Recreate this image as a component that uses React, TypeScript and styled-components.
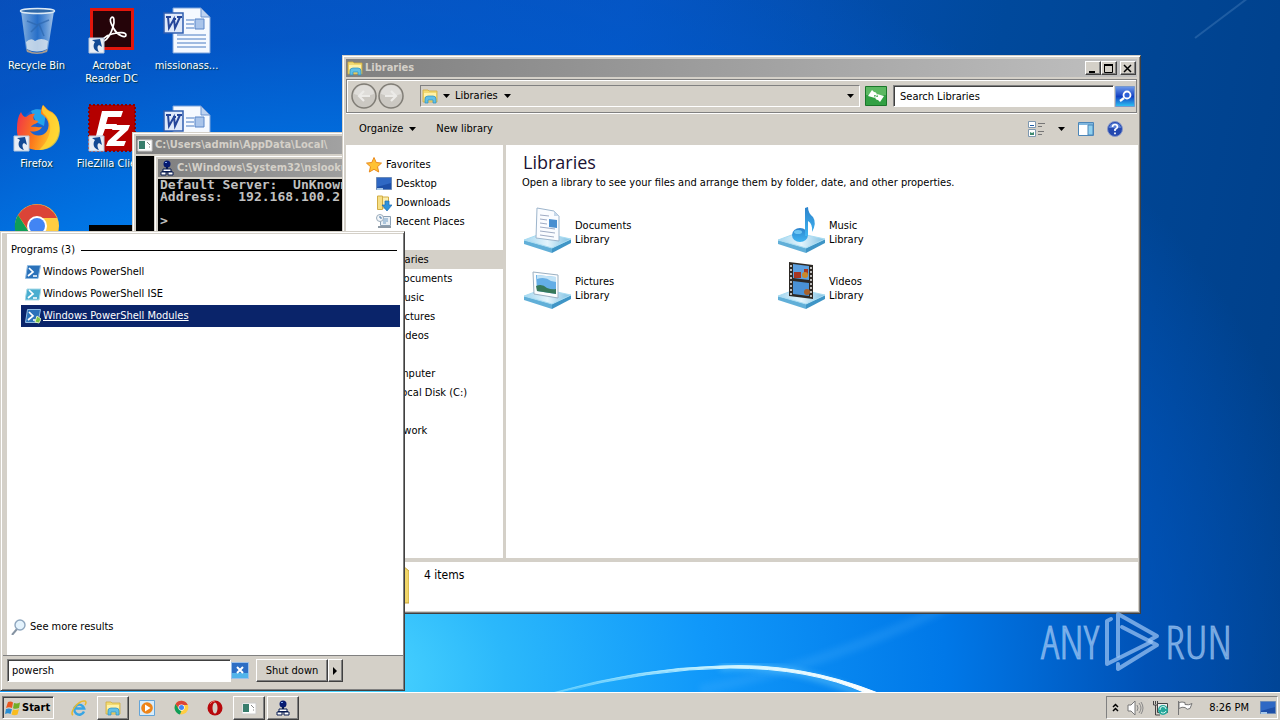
import React from "react";
import styled, { createGlobalStyle, css } from "styled-components";

const face = "#d4d0c8";
const uiFont = `"DejaVu Sans Condensed", "DejaVu Sans", sans-serif`;

const GlobalStyle = createGlobalStyle`
  * { box-sizing: border-box; }
  body { margin: 0; font: 11px/14px ${uiFont}; color: #000; }
  button, input { font: inherit; color: inherit; margin: 0; padding: 0; border: 0; border-radius: 0; background: none; }
  a { color: inherit; text-decoration: none; }
  h1, h2, p, ul { margin: 0; padding: 0; font-weight: normal; list-style: none; }
  svg { display: block; flex: none; }
`;

const raised = css`
  border: 1px solid;
  border-color: #fff #404040 #404040 #fff;
  box-shadow: inset -1px -1px #808080;
`;
const sunken = css`
  border: 1px solid;
  border-color: #808080 #fff #fff #808080;
  box-shadow: inset 1px 1px #404040;
`;

/* ---------- desktop ---------- */
const Screen = styled.div`
  display: flex;
  flex-direction: column;
  min-height: 100vh;
`;
const Desktop = styled.main`
  position: relative;
  flex: 1;
  overflow: hidden;
  background:
    radial-gradient(ellipse 1000px 800px at 27% 98%, #4fd8ff 0%, #2bb8fb 16%, #1098fa 36%, #0078e8 60%, rgba(0, 92, 208, 0.6) 80%, rgba(0, 90, 200, 0) 100%),
    linear-gradient(100deg, #0a4bb4 0%, #0653c0 45%, #00499c 72%, #003f88 100%);
`;
const Wallpaper = styled.svg`
  position: absolute;
  left: 0;
  bottom: 0;
`;
const IconGrid = styled.ul`
  display: grid;
  grid-template-columns: repeat(3, 75px);
  grid-auto-rows: 98px;
  padding-top: 6px;
`;
const Shortcut = styled.a`
  position: relative;
  display: flex;
  flex-direction: column;
  align-items: center;
  gap: 5px;
  padding-right: 2px;
  color: #fff;
  line-height: 13px;
  text-align: center;
  white-space: pre-line;
  text-shadow: 1px 1px 1px #033;
`;
const DesktopIcon = styled.li`
  width: 75px;
`;

/* ---------- windows ---------- */
const Window = styled.section`
  position: absolute;
  display: flex;
  flex-direction: column;
  padding: 2px;
  background: ${face};
  border: 1px solid;
  border-color: ${face} #404040 #404040 ${face};
  box-shadow: inset 1px 1px #fff, inset -1px -1px #808080;
`;
const ExplorerWindow = styled(Window)`
  left: 342px;
  right: 139px;
  top: 55px;
  bottom: 78px;
`;
const HostWindow = styled(Window)`
  left: 132px;
  top: 132px;
  width: 400px;
  height: 300px;
`;
const LookupWindow = styled(Window)`
  left: 154px;
  top: 155px;
  width: 400px;
  height: 300px;
`;
const TitleBar = styled.header`
  display: flex;
  align-items: center;
  gap: 2px;
  height: 18px;
  margin: 1px 1px 0;
  padding: 0 1px;
  color: ${face};
  font-weight: bold;
  white-space: nowrap;
  background: linear-gradient(90deg, #808080, #c0c0c0);
`;
const Title = styled.h1`
  flex: 1;
  font-size: 11px;
  font-weight: bold;
`;
const CaptionButton = styled.button<{ $gap?: boolean }>`
  ${raised}
  display: grid;
  place-items: center;
  width: 16px;
  height: 14px;
  margin-left: ${(p) => (p.$gap ? 1 : -2)}px;
  background: ${face};
`;
const Console = styled.pre`
  flex: 1;
  margin: 2px 1px 1px;
  padding: 0 2px;
  color: #c0c0c0;
  background: #000;
  font: bold 13px/12px "DejaVu Sans Mono", monospace;
`;

/* ---------- explorer ---------- */
const NavBar = styled.div`
  display: flex;
  align-items: center;
  gap: 5px;
  height: 34px;
  margin: 2px 1px 0;
  padding: 0 1px 0 4px;
  border: 1px solid #808080;
  box-shadow: inset 1px 1px #fff, 0 1px #fff;
`;
const TravelButtons = styled.div`
  display: flex;
  gap: 1px;
  margin-right: 11px;
`;
const PlainButton = styled.button`
  display: flex;
  align-items: center;
  gap: 6px;
  white-space: nowrap;
`;
const AddressBar = styled.div`
  display: flex;
  flex: 1;
  align-items: center;
  gap: 5px;
  height: 22px;
  padding: 0 5px 0 1px;
  border: 1px solid;
  border-color: #808080 #fff #fff #808080;
`;
const Spring = styled.span`
  flex: 1;
`;
const SearchBox = styled.input`
  ${sunken}
  width: 221px;
  height: 22px;
  padding: 0 6px;
  background: #fff;
  margin-left: 1px;
  &::placeholder { color: #000; opacity: 1; }
`;
const SearchButton = styled.button`
  margin-left: -4px;
`;
const CommandBar = styled.div`
  display: flex;
  align-items: center;
  gap: 20px;
  height: 32px;
  padding: 0 15px 0 14px;
`;
const ViewTools = styled.div`
  display: flex;
  align-items: center;
  gap: 13px;
`;
const Body = styled.div`
  display: flex;
  flex: 1;
  min-height: 0;
  margin-left: 1px;
  background: #fff;
`;
const Sidebar = styled.nav`
  width: 160px;
  padding-top: 10px;
  border-right: 3px solid ${face};
  overflow: hidden;
`;
const TreeItem = styled.a<{ $depth: number; $selected?: boolean }>`
  display: flex;
  align-items: center;
  gap: 4px;
  height: 19px;
  padding-left: ${(p) => 20 + p.$depth * 10}px;
  background: ${(p) => (p.$selected ? face : "transparent")};
`;
const TreeGap = styled.div`
  height: 19px;
`;
const Content = styled.div`
  flex: 1;
  padding: 6px 16px;
`;
const Heading = styled.h2`
  padding: 0 0 3px 1px;
  font: 18px/22px "Open Sans", sans-serif;
  color: #1a1233;
`;
const Libraries = styled.ul`
  display: grid;
  grid-template-columns: 254px 254px;
  grid-auto-rows: 56px;
  padding-top: 14px;
`;
const Library = styled.a`
  display: flex;
  align-items: center;
  gap: 2px;
  padding-left: 1px;
`;
const LibraryLabel = styled.span`
  width: 60px;
  padding-top: 8px;
`;
const Details = styled.footer`
  display: flex;
  align-items: flex-start;
  gap: 15px;
  height: 53px;
  padding-left: 16px;
  background: #fff;
  border-top: 4px solid ${face};
`;
const ItemCount = styled.p`
  padding-top: 6px;
  font-size: 12px;
`;

/* ---------- start menu ---------- */
const StartMenu = styled.section`
  position: absolute;
  z-index: 2;
  left: 0;
  bottom: 1px;
  width: 405px;
  height: 460px;
  display: flex;
  flex-direction: column;
  padding: 2px 1px 1px 2px;
  background: ${face};
  border: 1px solid;
  border-color: ${face} #404040 #404040 ${face};
  box-shadow: inset 1px 1px #fff, inset -1px -1px #808080;
`;
const Results = styled.div`
  flex: 1;
  display: flex;
  flex-direction: column;
  margin-left: 4px;
  padding: 9px 3px 20px 4px;
  background: #fff;
`;
const GroupTitle = styled.h2`
  display: flex;
  align-items: center;
  gap: 6px;
  font-size: 11px;
  line-height: 14px;
  padding-right: 3px;
  margin-bottom: 4px;
  &::after { content: ""; flex: 1; border-top: 1px solid #000; }
`;
const Result = styled.a<{ $selected?: boolean }>`
  display: flex;
  align-items: center;
  gap: 2px;
  height: 22px;
  margin-left: 10px;
  padding-left: 4px;
  ${(p) => p.$selected && css`
    color: #fff;
    background: #0a246a;
    text-decoration: underline;
  `}
`;
const MoreResults = styled.a`
  display: flex;
  align-items: center;
  gap: 3px;
  margin-top: auto;
`;
const MenuFooter = styled.div`
  display: flex;
  align-items: flex-start;
  height: 34px;
  padding: 3px 0 0 4px;
  border-top: 1px solid #808080;
`;
const QueryBox = styled.input`
  ${sunken}
  width: 224px;
  height: 23px;
  padding: 0 4px;
  background: #fff;
`;
const ClearButton = styled.button`
  margin: 3px 7px 0 0;
`;
const RaisedButton = styled.button<{ $width: number }>`
  ${raised}
  display: grid;
  place-items: center;
  width: ${(p) => p.$width}px;
  height: 23px;
  background: ${face};
`;

/* ---------- taskbar ---------- */
const Taskbar = styled.footer`
  display: flex;
  align-items: center;
  height: 28px;
  padding: 2px 2px 0;
  background: ${face};
  border-top: 1px solid #fff;
`;
const StartButton = styled.button`
  ${sunken}
  display: flex;
  align-items: center;
  gap: 1px;
  width: 52px;
  height: 23px;
  padding-left: 2px;
  margin-right: 8px;
  font-weight: bold;
`;
const TaskButton = styled.button<{ $open?: boolean }>`
  display: grid;
  place-items: center;
  width: 32px;
  height: 24px;
  margin: 0 1px;
  border: 1px solid transparent;
  ${(p) => p.$open && raised}
`;
const Tray = styled.div`
  display: flex;
  align-items: center;
  gap: 8px;
  height: 23px;
  margin-left: auto;
  padding: 0 1px 0 5px;
  border: 1px solid;
  border-color: #808080 #fff #fff #808080;
`;
const Clock = styled.time`
  padding: 0 3px 0 8px;
`;
const Watermark = styled.div`
  position: absolute;
  z-index: 3;
  right: 48px;
  bottom: 20px;
  display: flex;
  align-items: center;
  gap: 4px;
  color: rgba(160, 200, 245, 0.7);
  -webkit-text-stroke: 1px rgba(160, 200, 245, 0.6);
  font: 300 46px/62px "Open Sans Condensed Light", "Open Sans Condensed", "Roboto Condensed", "Liberation Sans Narrow", sans-serif;
`;

/* ---------- icons ---------- */
const Arrow = ({ side }: { side?: boolean }) =>
  side ? <svg width="5" height="8"><path d="M0 0v8l4-4z" /></svg> : <svg width="7" height="4"><path d="M0 0h7L3.500 4z" /></svg>;

const ShortcutMark = () => (
  <g>
    <path d="M1 32h15v15H1z" fill="#e8eef6" stroke="#b8c8dc" />
    <path d="M4 34l8-1 2 8-3-2c-2 1-2 4 0 7-5-1-7-6-4-10z" fill="#134a94" />
  </g>
);
const BinIcon = () => (
  <svg width="48" height="48" viewBox="0 0 48 48">
    <defs><linearGradient id="bin"><stop stopColor="#b7d5ec" stopOpacity=".75" /><stop offset=".5" stopColor="#4a8cd0" stopOpacity=".5" /><stop offset="1" stopColor="#c4dcf2" stopOpacity=".85" /></linearGradient></defs>
    <path d="M8 5l5 38q11 6 22 0l6-38z" fill="url(#bin)" />
    <path d="M13 36q5-5 9-1 6-4 13 0l-1 8q-10 5-20 0z" fill="#dfe7ee" opacity=".8" />
    <path d="M13 43q11 7 22 0l-1 3q-10 4-20 0z" fill="#a89c90" />
    <ellipse cx="24.500" cy="5" rx="17" ry="2.500" fill="#2f68a8" stroke="#dbe9f5" strokeWidth="1.500" />
    <path d="M14 15l10 4 12-5M18 26l8-8 5 12" stroke="#2c67ae" strokeWidth="1.500" fill="none" opacity=".7" />
  </svg>
);
const AcrobatIcon = () => (
  <svg width="48" height="48" viewBox="0 0 48 48">
    <path d="M2 2h44v42H2z" fill="#e2160c" /><path d="M5 5h38v36H5z" fill="#250409" />
    <path d="M23 12c3-3 4 3 2 9-2 7-6 13-9 14-3 0 0-5 8-7 7-2 14-2 14 1 0 4-9 0-12-6-3-5-5-9-3-11z" fill="none" stroke="#fff" strokeWidth="1.700" />
    <ShortcutMark />
  </svg>
);
const WordIcon = () => (
  <svg width="48" height="48" viewBox="0 0 48 48">
    <path d="M10 2h28l9 9v36H10z" fill="#f5f9ff" stroke="#7ca3da" /><path d="M38 2v9h9z" fill="#bdd2f0" stroke="#6d93cf" />
    <path d="M23 14h8M23 18h8M23 22h8M14 29h29M14 33h29M14 37h29M14 41h29" stroke="#83a5d8" strokeWidth="1.500" />
    <path d="M32 13h9v10h-9z" fill="#a9c4ea" stroke="#5a86c8" />
    <path d="M1 7h19v20H1z" fill="#dfe9fa" stroke="#2f5db0" strokeWidth="1.500" />
    <path d="M3 11h5M5 11l1 11 5-9 1 9 5-11M10 13h3M14 11h5" stroke="#24459a" strokeWidth="2" fill="none" />
  </svg>
);
const FirefoxIcon = () => (
  <svg width="48" height="48" viewBox="0 0 48 48">
    <defs><linearGradient id="fx" x1="0" y1=".2" x2="1" y2=".5"><stop stopColor="#f0324a" /><stop offset=".5" stopColor="#fb7a1c" /><stop offset="1" stopColor="#ffd42c" /></linearGradient></defs>
    <circle cx="26" cy="22" r="17" fill="#1a62d0" /><path d="M18 7c5-3 11-2 15 1l-2 14-8-4z" fill="#23a4ec" />
    <path d="M8 8c1 3 3 5 5 5 3-3 7-4 9-3-2 2-2 4-1 6l4 1c0 3-6 3-7 6 4-1 8 1 11 0-3 5-9 5-12 4 4 6 13 6 17 0 4-7 0-14-6-17 0-3 0-6 2-9 3 2 4 5 7 6 7 3 10 11 9 20-1 12-11 19-21 19C12 46 3 36 4 24c0-6 1-12 4-16z" fill="url(#fx)" />
    <path d="M30 1c-2 4-1 8 2 10 9 9 6 24-6 35 12 0 20-7 21-19 0-10-4-16-10-19-3-2-5-4-7-7z" fill="#ffd935" opacity=".75" />
    <ShortcutMark />
  </svg>
);
const FileZillaIcon = () => (
  <svg width="48" height="48" viewBox="0 0 48 48">
    <path d="M1 1h46v46H1z" fill="#b40000" stroke="#8c0000" strokeWidth="2" strokeDasharray="2 2" />
    <path d="M14 7h21l-2 6H20l-2 7h11l-2 5H17l-4 11H7zM26 21h16l-2 5-12 11h10l-2 5H18l2-5 12-11h-8z" fill="#fff" />
    <ShortcutMark />
  </svg>
);
const ChromeIcon = ({ size }: { size: number }) => (
  <svg width={size} height={size} viewBox="0 0 48 48">
    <circle cx="24" cy="24" r="22" fill="#ffcd42" /><path d="M5 13a22 22 0 0 1 39 3H24l-8 13z" fill="#db4437" />
    <path d="M5 13l11 17 8 4-5 12A22 22 0 0 1 5 13z" fill="#0f9d58" />
    <circle cx="24" cy="24" r="10" fill="#fff" /><circle cx="24" cy="24" r="8" fill="#4285f4" />
  </svg>
);
const BlackIcon = () => <svg width="48" height="48"><path d="M1 23h47v25H1z" /></svg>;

const FolderIcon = ({ size = 16 }: { size?: number }) => (
  <svg width={size} height={size} viewBox="0 0 16 16">
    <path d="M1 2h5l1 1h8v11H1z" fill="#f2da72" stroke="#d0ac3c" strokeWidth=".8" /><path d="M2 5h12v4H2z" fill="#fff2a8" />
    <path d="M3 15v-4q0-3 3-3h5q3 0 3 3v4h-3v-3H6v3z" fill="#62c0e6" stroke="#2d8fc0" strokeWidth=".7" />
  </svg>
);
const CmdIcon = () => (
  <svg width="16" height="16" viewBox="0 0 16 16"><path d="M1 3h14v11H1z" fill="#fff" stroke="#ccc" /><path d="M2 4h6v8H2z" fill="#387d6c" /><path d="M10 5l3 3M12 10h1" stroke="#888" /></svg>
);
const NetIcon = () => (
  <svg width="16" height="16" viewBox="0 0 16 16">
    <circle cx="8" cy="4" r="3.500" fill="#061a70" /><path d="M6 2h2v1H6z" fill="#7da8f0" />
    <path d="M7 7h2v2H7z" fill="#061a50" /><path d="M4 9h8v3H4z" fill="#fff" stroke="#061a50" /><path d="M2 12h5v3H2zM9 12h5v3H9z" fill="#fff" stroke="#061a50" /><path d="M3 11h10v1H3z" fill="#061a50" />
  </svg>
);
const Travel = ({ back }: { back?: boolean }) => (
  <svg width="26" height="26" viewBox="0 0 26 26">
    <circle cx="13" cy="13" r="12" fill="#cbc8c2" stroke="#807d76" strokeWidth="1.500" /><path d="M3 11a10 9 0 0 1 20 0q-10 4-20 0z" fill="#dfddd9" />
    <path d={back ? "M19 13H8m5-5l-5 5 5 5" : "M7 13h11m-5-5l5 5-5 5"} fill="none" stroke="#ecebe8" strokeWidth="2.200" />
  </svg>
);
const RefreshIcon = () => (
  <svg width="22" height="20" viewBox="0 0 22 20">
    <path d="M.5.500h21v19H.5z" fill="#32a043" stroke="#1b762a" /><path d="M1 1h20v8H1z" fill="#5cb862" />
    <path d="M3 10l4-6 2 2q3 0 3 4-2-1-3-1l1 3zM19 10l-4 6-2-2q-3 0-3-4 2 1 3 1l-1-3z" fill="#fff" />
  </svg>
);
const SearchIcon = () => (
  <svg width="20" height="21" viewBox="0 0 20 21">
    <defs><linearGradient id="sb" x2="0" y2="1"><stop stopColor="#6f9bea" /><stop offset=".5" stopColor="#123fc2" /><stop offset="1" stopColor="#2ec4f4" /></linearGradient></defs>
    <path d="M.5.500h19v20H.5z" fill="url(#sb)" stroke="#7899cc" /><circle cx="12" cy="9" r="3.500" fill="#2c60d8" stroke="#fff" strokeWidth="1.800" /><path d="M9 12l-4 3" stroke="#fff" strokeWidth="2.200" />
  </svg>
);
const ViewsIcon = () => (
  <svg width="17" height="16" viewBox="0 0 17 16">
    <path d="M.5.500h7v6h-7zM.5 8.500h7v7h-7z" fill="#fff" stroke="#7e98b0" /><path d="M2 4h4v1H2z" fill="#1f5fa8" /><path d="M2 14v-3l2 1 2-1v3z" fill="#3f8a70" />
    <path d="M10 2.500h7M10 5.500h4M10 10.500h6M10 13.500h4" stroke="#777" />
  </svg>
);
const PaneIcon = () => (
  <svg width="16" height="14" viewBox="0 0 16 14"><path d="M.5.500h15v13H.5z" fill="#fff" stroke="#4c86b8" /><path d="M1 1h14v2H1z" fill="#7fb6de" /><path d="M10 3h5v10h-5z" fill="#8fd0ee" stroke="#4c86b8" /></svg>
);
const HelpIcon = () => (
  <svg width="16" height="16" viewBox="0 0 16 16">
    <circle cx="8" cy="8" r="7.500" fill="#2549b0" stroke="#8798c8" /><path d="M2 7a6 5 0 0 1 12 0z" fill="#5d82d8" />
    <path d="M5.500 6q0-2.500 2.500-2.500T10.500 6Q10.500 7 8 8.500v1.500M8 11.500v1.700" fill="none" stroke="#fff" strokeWidth="1.700" />
  </svg>
);
const StarIcon = () => (
  <svg width="16" height="16" viewBox="0 0 16 16"><path d="M8 .5l2.200 5 5.300.6-4 3.600 1.200 5.300L8 12.300 3.300 15l1.200-5.300-4-3.600 5.300-.6z" fill="#ffc234" stroke="#e98a1c" /></svg>
);
const MonitorIcon = () => (
  <svg width="16" height="14" viewBox="0 0 16 14"><path d="M.5.500h15v12H.5z" fill="#1d4fa8" stroke="#6a8ab8" /><path d="M1 1h14v5L1 10z" fill="#2f68c4" /><path d="M1 11h6v2H1z" fill="#a8c8e8" /></svg>
);
const DownloadIcon = () => (
  <svg width="16" height="16" viewBox="0 0 16 16"><path d="M1.500 1h5v13.500h-5z" fill="#f6df86" stroke="#d2ad45" /><path d="M6.500 2h6v11h-6z" fill="#fbeeb0" stroke="#d2ad45" /><path d="M9 6h4v4h3l-5 6-5-6h3z" fill="#2e93dc" stroke="#1c6bb0" strokeWidth=".7" /></svg>
);
const RecentIcon = () => (
  <svg width="16" height="16" viewBox="0 0 16 16"><path d="M4.500 2.500h10v9h-10z" fill="#eaf0f5" stroke="#8ba0b4" /><path d="M7 5h5M7 7h5M7 9h3" stroke="#6e9cc4" /><path d="M2 12h13v2H2z" fill="#8d9aa6" /><circle cx="4" cy="4" r="3.500" fill="#f4f7fa" stroke="#9aabba" /><path d="M4 2v2h2" stroke="#4878a8" fill="none" /></svg>
);
const BlankIcon = () => <svg width="16" height="16" />;
const PsIcon = ({ kind }: { kind: "shell" | "ise" | "modules" }) => (
  <svg width="16" height="16" viewBox="0 0 16 16">
    {kind === "ise" ? <path d="M2 3h14l-2 11H0z" fill="#4aaed0" stroke="#a9dbe8" /> : <path d="M2.500 1.500h13l-2.500 13H.5z" fill="#2b72ba" stroke="#8fbbe2" />}
    <path d="M4 4l4 4-5 4M8 12h4" stroke="#fff" strokeWidth="1.700" fill="none" />
    {kind === "modules" && <path d="M12 8l4 3-2 4-4-1z" fill="#7cc444" stroke="#dff0c0" />}
  </svg>
);
const MagnifierIcon = () => (
  <svg width="16" height="16" viewBox="0 0 16 16"><path d="M6 10l-5 6" stroke="#8593a2" strokeWidth="2" /><circle cx="9" cy="6" r="5" fill="#e4f3fd" stroke="#8ea6be" strokeWidth="1.400" /></svg>
);
const ClearIcon = () => (
  <svg width="18" height="17" viewBox="0 0 18 17"><path d="M.5.500h17v16H.5z" fill="#2d6ec4" stroke="#9cc0e8" /><path d="M1 11h16v5H1z" fill="#51b4ea" /><path d="M6 5l6 6m0-6l-6 6" stroke="#fff" strokeWidth="2" /></svg>
);
const FlagLogo = () => (
  <svg width="16" height="16" viewBox="0 0 16 16"><path d="M3 2q3-1 5 .5L7 8Q4 6.500 1 8z" fill="#e9571f" /><path d="M9 3q3 1 6-.5L14 8q-3 1.500-6 .3z" fill="#72ae26" /><path d="M1 9q3-1 6 .2L5.500 14Q3 12.500 0 14z" fill="#2a8fd4" /><path d="M8 9.500q3 1 6-.5l-1.500 5.500q-3 1.500-6 0z" fill="#f9bc1d" /></svg>
);
const IeIcon = () => (
  <svg width="18" height="18" viewBox="0 0 18 18"><path d="M14 12.500A5 5 0 1 1 14.200 9.500H5" fill="none" stroke="#38a5e4" strokeWidth="2.400" /><path d="M3 16C-1 14 8 1 15 2q2 1 0 4" fill="none" stroke="#eab92c" strokeWidth="1.500" /></svg>
);
const MediaIcon = () => (
  <svg width="16" height="16" viewBox="0 0 16 16"><path d="M.5.500h15v15H.5z" fill="#d8ecfa" stroke="#63a4d8" /><circle cx="8" cy="8" r="5.800" fill="#ee8418" /><path d="M6 4.500v7L11.500 8z" fill="#fff" /></svg>
);
const OperaIcon = () => (
  <svg width="16" height="16" viewBox="0 0 16 16"><ellipse cx="8" cy="8" rx="7.500" ry="7.500" fill="#b8080c" /><ellipse cx="8" cy="8" rx="2.500" ry="5.500" fill={face} /><path d="M3 4q2-3 5-3" stroke="#ee6a60" fill="none" /></svg>
);
const SpeakerIcon = () => (
  <svg width="17" height="16" viewBox="0 0 17 16"><path d="M1 5h3l4-4v14l-4-4H1z" fill="#fff" stroke="#777" /><path d="M10 5q2 3 0 6M12 3q4 5 0 10M14 2q4 6 0 12" fill="none" stroke="#888" /></svg>
);
const TrayNetIcon = () => (
  <svg width="17" height="16" viewBox="0 0 17 16"><path d="M5.500 3.500h10v9h-10z" fill="#eee" stroke="#444" /><path d="M1.500 1v4h4V1M3.500 1v3M3.500 5v10H8" fill="none" stroke="#444" /><circle cx="11" cy="10" r="5" fill="#25a89a" /><path d="M8 10a3 3 0 0 1 6-1m0 2a3 3 0 0 1-5 1" stroke="#dffaf5" fill="none" /></svg>
);
const TrayFlagIcon = () => (
  <svg width="16" height="16" viewBox="0 0 16 16"><path d="M1.500 1v14M2 2.500q3-1 6 0v2q4 1 7-1l-2 5q-3 2-5-1-3-1-6 1z" fill="#fff" stroke="#777" /></svg>
);
const ChevronIcon = () => <svg width="7" height="9" viewBox="0 0 7 9"><path d="M1 4l2.500-2.500L6 4M1 8l2.500-2.500L6 8" fill="none" stroke="#000" strokeWidth="1.500" /></svg>;

const LibraryIcon = ({ kind }: { kind: string }) => (
  <svg width="50" height="50" viewBox="0 0 50 50">
    <defs>
      <linearGradient id="tray"><stop stopColor="#a4d6ef" /><stop offset=".5" stopColor="#e3f4fc" /><stop offset="1" stopColor="#7cbfe2" /></linearGradient>
      <linearGradient id="note" x2="0" y2="1"><stop stopColor="#2c83cc" /><stop offset="1" stopColor="#3fb5f2" /></linearGradient>
    </defs>
    <path d="M1 36l28 8v5L1 40z" fill="#61afd8" /><path d="M29 44l19-9v4l-19 10z" fill="#3f95c6" /><path d="M1 36l19-7 28 6-19 9z" fill="url(#tray)" stroke="#a8dcf2" />
    {kind === "Documents" && <g><path d="M14 4l17 3 5 5v25l-23-3z" fill="#fafcff" stroke="#9db5cc" /><path d="M31 7v5h5z" fill="#c6d8ea" /><path d="M17 11l9 1M17 15l7 1M17 19l7 1M17 23l15 2M17 27l15 2M17 31l14 2" stroke="#9fabc4" /><path d="M26 15l8 1v8l-8-1z" fill="#4a8fd0" /></g>}
    {kind === "Pictures" && <g><path d="M10 12l25 3v23l-24-4z" fill="#fcfdfe" stroke="#9bb0c2" /><path d="M13 15l20 2v17l-19-3z" fill="#64aee6" /><path d="M13 26q6-3 11 2 5 2 9 1v5l-19-3z" fill="#37795a" /><path d="M14 19q8-3 14 2l5 1v-5l-19-2z" fill="#c3e3f6" /></g>}
    {kind === "Music" && <g><ellipse cx="23" cy="31" rx="8" ry="7" fill="url(#note)" /><path d="M28 4l3-1q0 6 5 10 4 6-1 15 1-8-4-11v15h-3z" fill="url(#note)" /><ellipse cx="21" cy="28" rx="4" ry="2" fill="#6cc4f2" /></g>}
    {kind === "Videos" && <g><path d="M12 2l24 3v34l-24-3z" fill="#2d2925" /><path d="M16 4l16 2v14l-16-2z" fill="#5ca0e0" /><path d="M16 21l16 2v13l-16-2z" fill="#4a92d6" /><path d="M17 12h7v6h-7zM27 9h4v6h-4z" fill="#a83522" /><circle cx="28" cy="15" r="3" fill="#c9882c" /><circle cx="30" cy="32" r="3" fill="#a8602a" /><path d="M14 5v31M34 7v31" stroke="#eee" strokeWidth="1.500" strokeDasharray="2 2" /></g>}
  </svg>
);
const PlayLogo = () => (
  <svg width="58" height="62" viewBox="0 0 58 62" fill="none" stroke="currentColor" strokeWidth="4" strokeLinejoin="round" strokeLinecap="round">
    <path d="M8 9L4 11V54L48 32" />
    <path d="M15 46V4L54 26L47 30" />
    <path d="M19 17L54 35L15 59V54" />
  </svg>
);

const shortcuts = [
  { label: "Recycle Bin", icon: <BinIcon /> },
  { label: "Acrobat\nReader DC", icon: <AcrobatIcon /> },
  { label: "missionass...", icon: <WordIcon /> },
  { label: "Firefox", icon: <FirefoxIcon /> },
  { label: "FileZilla Client", icon: <FileZillaIcon /> },
  { label: "", icon: <WordIcon /> },
  { label: "", icon: <ChromeIcon size={48} /> },
  { label: "", icon: <BlackIcon /> },
];
const tree = [
  { label: "Favorites", depth: 0, icon: <StarIcon /> },
  { label: "Desktop", depth: 1, icon: <MonitorIcon /> },
  { label: "Downloads", depth: 1, icon: <DownloadIcon /> },
  { label: "Recent Places", depth: 1, icon: <RecentIcon /> },
  null,
  { label: "Libraries", depth: 0, icon: <FolderIcon />, selected: true },
  { label: "Documents", depth: 1, icon: <BlankIcon /> },
  { label: "Music", depth: 1, icon: <BlankIcon /> },
  { label: "Pictures", depth: 1, icon: <BlankIcon /> },
  { label: "Videos", depth: 1, icon: <BlankIcon /> },
  null,
  { label: "Computer", depth: 0, icon: <BlankIcon /> },
  { label: "Local Disk (C:)", depth: 1, icon: <BlankIcon /> },
  null,
  { label: "Network", depth: 0, icon: <BlankIcon /> },
];

export default function App() {
  return (
    <Screen>
      <GlobalStyle />
      <Desktop>
        <Wallpaper width="1280" height="692" viewBox="0 0 1280 692" aria-hidden="true">
          <defs>
            <filter id="soft"><feGaussianBlur stdDeviation="3" /></filter>
            <linearGradient id="arc"><stop stopColor="#7fdcff" stopOpacity=".5" /><stop offset=".5" stopColor="#c8f2ff" /><stop offset="1" stopColor="#fff" /></linearGradient>
          </defs>
          <path d="M700 690Q830 665 960 600" stroke="#58b8ff" strokeWidth="10" opacity=".2" fill="none" filter="url(#soft)" />
          <path d="M1195 38L1248-2" stroke="#7aa8d8" strokeWidth="2" opacity=".25" />
          <path d="M720 667q80-4 150 32" stroke="#7fd8ff" strokeWidth="6" opacity=".5" fill="none" filter="url(#soft)" />
          <path d="M552 693Q640 668 720 666 800 662 878 693L866 693Q810 668 730 668 650 669 556 693z" fill="url(#arc)" stroke="url(#arc)" />
        </Wallpaper>
        <IconGrid>
          {shortcuts.map((s, i) => (
            <DesktopIcon key={i}><Shortcut href="#">{s.icon}<span>{s.label}</span></Shortcut></DesktopIcon>
          ))}
        </IconGrid>

        <HostWindow>
          <TitleBar><CmdIcon /><Title>C:\Users\admin\AppData\Local\</Title></TitleBar>
          <Console />
        </HostWindow>
        <LookupWindow>
          <TitleBar><NetIcon /><Title>C:\Windows\System32\nslookup.exe</Title></TitleBar>
          <Console>{"Default Server:  UnKnown\nAddress:  192.168.100.2\n\n>"}</Console>
        </LookupWindow>

        <ExplorerWindow>
          <TitleBar>
            <FolderIcon /><Title>Libraries</Title>
            <CaptionButton aria-label="Minimize"><svg width="10" height="9"><path d="M1 7h6v2H1z" /></svg></CaptionButton>
            <CaptionButton aria-label="Maximize"><svg width="10" height="9"><path d="M.5 1h8v7.500h-8z" fill="none" stroke="#000" /><path d="M0 0h9v2H0z" /></svg></CaptionButton>
            <CaptionButton aria-label="Close" $gap><svg width="10" height="9"><path d="M1 1l7 7M8 1L1 8" stroke="#000" strokeWidth="1.500" /></svg></CaptionButton>
          </TitleBar>
          <NavBar>
            <TravelButtons>
              <PlainButton aria-label="Back"><Travel back /></PlainButton>
              <PlainButton aria-label="Forward"><Travel /></PlainButton>
            </TravelButtons>
            <AddressBar>
              <FolderIcon size={16} />
              <PlainButton aria-label="Locations"><Arrow /></PlainButton>
              <PlainButton>Libraries<Arrow /></PlainButton>
              <Spring />
              <PlainButton aria-label="Previous locations"><Arrow /></PlainButton>
            </AddressBar>
            <PlainButton aria-label="Refresh"><RefreshIcon /></PlainButton>
            <SearchBox placeholder="Search Libraries" aria-label="Search Libraries" />
            <SearchButton aria-label="Search"><SearchIcon /></SearchButton>
          </NavBar>
          <CommandBar>
            <PlainButton>Organize<Arrow /></PlainButton>
            <PlainButton>New library</PlainButton>
            <Spring />
            <ViewTools>
              <PlainButton aria-label="Change view"><ViewsIcon /></PlainButton>
              <PlainButton aria-label="More views"><Arrow /></PlainButton>
              <PlainButton aria-label="Preview pane"><PaneIcon /></PlainButton>
              <PlainButton aria-label="Help"><HelpIcon /></PlainButton>
            </ViewTools>
          </CommandBar>
          <Body>
            <Sidebar>
              {tree.map((t, i) =>
                t ? <TreeItem key={i} href="#" $depth={t.depth} $selected={t.selected}>{t.icon}{t.label}</TreeItem> : <TreeGap key={i} />
              )}
            </Sidebar>
            <Content>
              <Heading>Libraries</Heading>
              <p>Open a library to see your files and arrange them by folder, date, and other properties.</p>
              <Libraries>
                {["Documents", "Music", "Pictures", "Videos"].map((name) => (
                  <li key={name}><Library href="#"><LibraryIcon kind={name} /><LibraryLabel>{name} Library</LibraryLabel></Library></li>
                ))}
              </Libraries>
            </Content>
          </Body>
          <Details>
            <svg width="48" height="44"><path d="M2 4h40l6 5v32H2z" fill="#f1d669" stroke="#c9a43a" /></svg>
            <ItemCount>4 items</ItemCount>
          </Details>
        </ExplorerWindow>

        <StartMenu>
          <Results>
            <GroupTitle>Programs (3)</GroupTitle>
            <Result href="#"><PsIcon kind="shell" />Windows PowerShell</Result>
            <Result href="#"><PsIcon kind="ise" />Windows PowerShell ISE</Result>
            <Result href="#" $selected><PsIcon kind="modules" />Windows PowerShell Modules</Result>
            <MoreResults href="#"><MagnifierIcon />See more results</MoreResults>
          </Results>
          <MenuFooter>
            <QueryBox defaultValue="powersh" aria-label="Search programs and files" />
            <ClearButton aria-label="Clear search"><ClearIcon /></ClearButton>
            <RaisedButton $width={72}>Shut down</RaisedButton>
            <RaisedButton $width={15} aria-label="Shutdown options"><Arrow side /></RaisedButton>
          </MenuFooter>
        </StartMenu>

        <Watermark><span>ANY</span><PlayLogo /><span>RUN</span></Watermark>
      </Desktop>

      <Taskbar>
        <StartButton><FlagLogo />Start</StartButton>
        <TaskButton aria-label="Internet Explorer"><IeIcon /></TaskButton>
        <TaskButton aria-label="Windows Explorer" $open><FolderIcon /></TaskButton>
        <TaskButton aria-label="Media Player"><MediaIcon /></TaskButton>
        <TaskButton aria-label="Chrome"><ChromeIcon size={15} /></TaskButton>
        <TaskButton aria-label="Opera"><OperaIcon /></TaskButton>
        <TaskButton aria-label="Command prompt" $open><CmdIcon /></TaskButton>
        <TaskButton aria-label="nslookup" $open><NetIcon /></TaskButton>
        <Tray>
          <ChevronIcon /><SpeakerIcon /><TrayNetIcon /><TrayFlagIcon />
          <Clock>8:26 PM</Clock>
          <MonitorIcon />
        </Tray>
      </Taskbar>
    </Screen>
  );
}
